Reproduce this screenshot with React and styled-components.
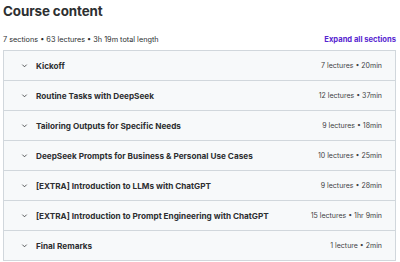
import styled, { createGlobalStyle } from 'styled-components'

const GlobalStyle = createGlobalStyle`
    html, body {
        margin: 0;
        padding: 0;
        background: #ffffff;
    }
    body {
        font-family: Inter, 'Noto Sans', sans-serif;
        color: #2d2f31;
    }
`

const StyledPage = styled.main`
    padding: 1px 4px 0 3px;
    width: 400px;
    box-sizing: border-box;
`

const StyledTitle = styled.h2`
    margin: 0;
    font-size: 13.4px;
    font-weight: 700;
    line-height: 20px;
    letter-spacing: -0.1px;
`

const StyledSummary = styled.div`
    display: flex;
    justify-content: space-between;
    align-items: center;
    margin-top: 13px;
    height: 10px;
    font-size: 7.3px;
`

const StyledExpand = styled.span`
    color: #5624d0;
    font-weight: 700;
    font-size: 7.6px;
`

const StyledList = styled.div`
    margin-top: 6px;
    border: 1px solid #d1d7dc;
    border-bottom: none;
`

const StyledRow = styled.div`
    display: flex;
    align-items: center;
    height: 29px;
    padding: 0 13px 0 17px;
    background: #f7f9fa;
    border-bottom: 1px solid #d1d7dc;
`

const StyledChevron = styled.svg`
    width: 7px;
    height: 7px;
    flex: none;
    margin-right: 8px;
`

const StyledName = styled.span`
    flex: 1;
    font-size: 8.2px;
    font-weight: 700;
`

const StyledMeta = styled.span`
    font-size: 7px;
    color: #3e4143;
`

const sections = [
    { name: 'Kickoff', meta: '7 lectures • 20min' },
    { name: 'Routine Tasks with DeepSeek', meta: '12 lectures • 37min' },
    { name: 'Tailoring Outputs for Specific Needs', meta: '9 lectures • 18min' },
    { name: 'DeepSeek Prompts for Business & Personal Use Cases', meta: '10 lectures • 25min' },
    { name: '[EXTRA] Introduction to LLMs with ChatGPT', meta: '9 lectures • 28min' },
    { name: '[EXTRA] Introduction to Prompt Engineering with ChatGPT', meta: '15 lectures • 1hr 9min' },
    { name: 'Final Remarks', meta: '1 lecture • 2min' },
]

export default function App(){
    return(
        <StyledPage>
            <GlobalStyle />
            <StyledTitle>Course content</StyledTitle>
            <StyledSummary>
                <span>7 sections • 63 lectures • 3h 19m total length</span>
                <StyledExpand>Expand all sections</StyledExpand>
            </StyledSummary>
            <StyledList>
                {sections.map(s=>{
                    return (
                        <StyledRow key={s.name}>
                            <StyledChevron viewBox="0 0 8 8">
                                <path d="M1.5 3 L4 5.5 L6.5 3" fill="none" stroke="#2d2f31" strokeWidth="0.9" />
                            </StyledChevron>
                            <StyledName>{s.name}</StyledName>
                            <StyledMeta>{s.meta}</StyledMeta>
                        </StyledRow>
                    )
                })}
            </StyledList>
        </StyledPage>
    )
}
